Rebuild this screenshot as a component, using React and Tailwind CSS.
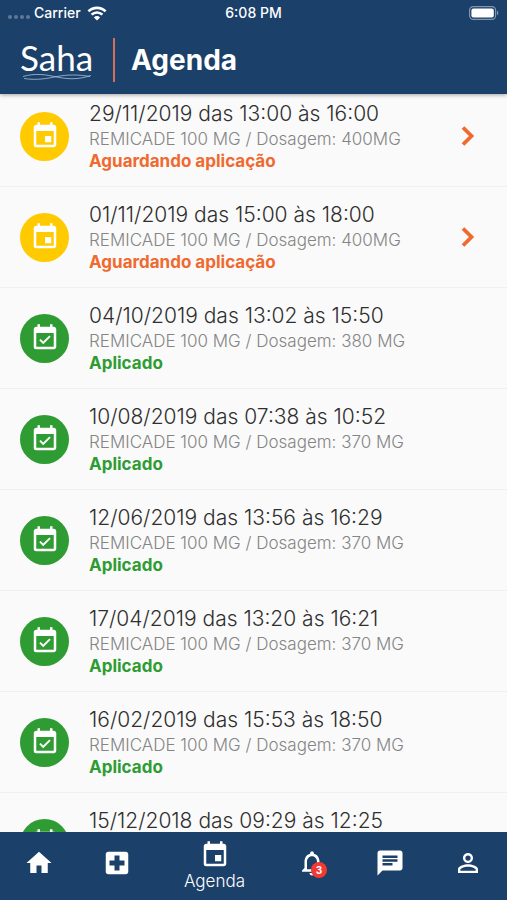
import React from 'react';
import {
  MdChat,
  MdEvent,
  MdEventAvailable,
  MdHome,
  MdLocalHospital,
  MdNotificationsNone,
  MdPersonOutline,
} from 'react-icons/md';

const appointments = [
  { date: '29/11/2019', start: '13:00', end: '16:00', dose: '400MG', done: false },
  { date: '01/11/2019', start: '15:00', end: '18:00', dose: '400MG', done: false },
  { date: '04/10/2019', start: '13:02', end: '15:50', dose: '380 MG', done: true },
  { date: '10/08/2019', start: '07:38', end: '10:52', dose: '370 MG', done: true },
  { date: '12/06/2019', start: '13:56', end: '16:29', dose: '370 MG', done: true },
  { date: '17/04/2019', start: '13:20', end: '16:21', dose: '370 MG', done: true },
  { date: '16/02/2019', start: '15:53', end: '18:50', dose: '370 MG', done: true },
  { date: '15/12/2018', start: '09:29', end: '12:25', dose: '370 MG', done: true },
];

const StatusBar = () => (
  <div className="grid grid-cols-3 items-center h-[26px] px-2 text-[14px] leading-[18px] font-medium">
    <div className="flex items-center gap-1">
      <div className="flex gap-0.5 pt-2">
        <span className="size-1 rounded-full bg-white/30"></span>
        <span className="size-1 rounded-full bg-white/30"></span>
        <span className="size-1 rounded-full bg-white/30"></span>
        <span className="size-1 rounded-full bg-white/30"></span>
      </div>
      <span>Carrier</span>
      <svg className="ml-0.5 w-5 h-[15px]" viewBox="0 0 20 15" fill="none" stroke="currentColor" strokeWidth="2.6">
        <path d="M1.4 5.4a12.2 12.2 0 0 1 17.2 0" />
        <path d="M4.6 8.7a7.6 7.6 0 0 1 10.8 0" />
        <path d="M10 14.6l-3.1-3.2a4.4 4.4 0 0 1 6.2 0z" fill="currentColor" stroke="none" />
      </svg>
    </div>
    <span className="text-center">6:08 PM</span>
    <svg className="w-[30px] h-[14px] justify-self-end" viewBox="0 0 30 14" fill="none">
      <rect x="0.6" y="0.6" width="26" height="12.8" rx="3.6" stroke="white" strokeOpacity="0.45" strokeWidth="1.2" />
      <rect x="2.4" y="2.4" width="22.4" height="9.2" rx="2" fill="white" />
      <path d="M28 4.8c1.8.6 1.8 3.8 0 4.4z" fill="white" fillOpacity="0.45" />
    </svg>
  </div>
);

const Header = () => (
  <header className="relative z-10 shrink-0 bg-[#1b4069] text-white shadow-[0_1px_4px_rgba(0,0,0,0.35)]">
    <StatusBar />
    <div className="flex items-center h-[68px] px-5">
      <div className="flex flex-col items-center">
        <span className="font-['Lato',sans-serif] text-[35px] leading-[34px]">Saha</span>
        <svg className="w-[68px] h-[6px]" viewBox="0 0 68 6" fill="none" stroke="#a9c3dc" strokeWidth="0.8">
          <path d="M0 2.5C12-1 22 .5 34 3s22 2.5 34-1.5" />
          <path d="M1 4.5C14 6.5 24 4.5 34 2.5S56 .5 67 2.5" />
        </svg>
      </div>
      <div className="ml-5 mr-4 w-[2px] h-11 bg-[#d4705a]"></div>
      <h1 className="text-[28px] leading-9 font-bold">Agenda</h1>
    </div>
  </header>
);

const Appointment = ({ date, start, end, dose, done }) => (
  <li className="flex items-center gap-5 px-5 py-[14px] border-b border-[#f0f0f0]">
    <div
      className={`flex items-center justify-center shrink-0 size-[49px] rounded-full text-white ${
        done ? 'bg-[#2e9c33]' : 'bg-[#ffcb00]'
      }`}
    >
      {done ? <MdEventAvailable size={30} /> : <MdEvent size={30} />}
    </div>
    <div className="flex-1 min-w-0 whitespace-nowrap">
      <p className="text-[21px] leading-7 font-light text-[#2f2f2f]">
        {date} das {start} às {end}
      </p>
      <p className="text-[17px] leading-[22px] font-light text-[#858585]">
        REMICADE 100 MG / Dosagem: {dose}
      </p>
      <p className={`text-[17px] leading-[22px] font-bold ${done ? 'text-[#2e9c33]' : 'text-[#f0692e]'}`}>
        {done ? 'Aplicado' : 'Aguardando aplicação'}
      </p>
    </div>
    {!done && (
      <button type="button" aria-label="Ver detalhes" className="shrink-0 text-[#f0692e]">
        <svg className="size-10" viewBox="0 0 40 40" fill="none" stroke="currentColor" strokeWidth="3.8">
          <path d="M16 11.5L24.500 20 16 28.500" />
        </svg>
      </button>
    )}
  </li>
);

const TabBar = () => (
  <nav className="flex shrink-0 h-[68px] bg-[#1b4069] text-white">
    <button type="button" aria-label="Início" className="flex flex-2 justify-center pt-4">
      <MdHome size={30} />
    </button>
    <button type="button" aria-label="Saúde" className="flex flex-2 justify-center pt-4">
      <MdLocalHospital size={30} />
    </button>
    <button type="button" aria-current="page" className="flex flex-3 flex-col items-center pt-2">
      <MdEvent size={30} />
      <span className="text-[17px] leading-[22px] font-light">Agenda</span>
    </button>
    <button type="button" aria-label="Notificações" className="flex flex-2 justify-center pt-4">
      <span className="relative h-[30px]">
        <MdNotificationsNone size={30} />
        <span className="absolute right-0 bottom-0 flex items-center justify-center size-4 rounded-full bg-[#f03a33] text-[10px] leading-4 font-bold">
          3
        </span>
      </span>
    </button>
    <button type="button" aria-label="Mensagens" className="flex flex-2 justify-center pt-4">
      <MdChat size={30} />
    </button>
    <button type="button" aria-label="Perfil" className="flex flex-2 justify-center pt-4">
      <MdPersonOutline size={30} />
    </button>
  </nav>
);

const App = () => {
  return (
    <div className="flex flex-col h-screen bg-[#fafafa] font-['Inter',sans-serif]">
      <Header />
      <main className="flex-1 min-h-0 overflow-hidden">
        {/* List sits slightly scrolled under the header */}
        <ul className="-mt-2">
          {appointments.map((item) => (
            <Appointment key={item.date} {...item} />
          ))}
        </ul>
      </main>
      <TabBar />
    </div>
  );
};

export default App;
